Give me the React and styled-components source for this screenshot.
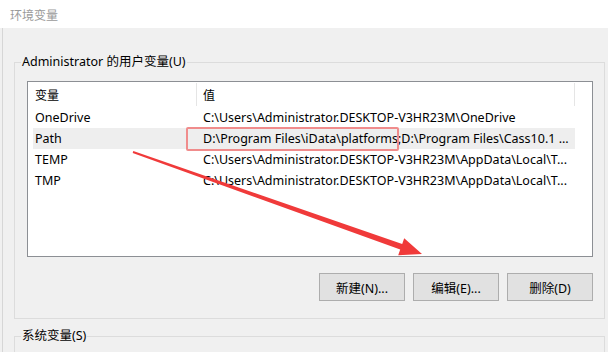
import React from "react";
import styled, { createGlobalStyle } from "styled-components";

const Global = createGlobalStyle`
  html, body { margin: 0; padding: 0; }
  body {
    font-family: "Noto Sans", "Noto Sans CJK SC", sans-serif;
    font-size: 12.5px;
    color: #000;
    background: #f0f0f0;
  }
`;

const Window = styled.div`
  position: relative;
  width: 608px;
  height: 352px;
  overflow: hidden;
  background:
    linear-gradient(to right, transparent 2px, #d6d6d6 2px, #d6d6d6 3px, transparent 3px),
    #f0f0f0;
  display: flex;
  flex-direction: column;
`;

const TitleBar = styled.div`
  height: 28px;
  flex: none;
  background: #fff;
  display: flex;
  align-items: center;
  padding-left: 10px;
  color: #9a9a9a;
  font-family: "Noto Sans CJK SC", sans-serif;
  font-size: 12px;
`;

const Group = styled.fieldset`
  margin: ${(p) => p.$mt}px 3px 0 14px;
  padding: 0;
  border: 1px solid #dcdcdc;
  min-width: 0;
`;

const Legend = styled.legend`
  margin-left: 6px;
  padding: 0 1px;
  height: 16px;
  line-height: 16px;
  font-family: "Noto Sans", "Noto Sans CJK SC", sans-serif;
  font-size: 12.5px;
  color: #000;
`;

const GroupBody = styled.div`
  padding: 11px 11px 17px 12px;
  display: flex;
  flex-direction: column;
`;

const ListBox = styled.div`
  position: relative;
  height: 176px;
  box-sizing: border-box;
  border: 1px solid #8c8f94;
  background: #fff;
  display: flex;
  flex-direction: column;
`;

const HeaderRow = styled.div`
  display: flex;
  height: 25px;
  padding-left: 5px;
  align-items: stretch;
`;

const HeadCell = styled.div`
  width: ${(p) => p.$w}px;
  box-sizing: border-box;
  padding-left: ${(p) => p.$pl}px;
  display: flex;
  align-items: center;
  border-right: ${(p) => (p.$sep ? "1px solid #e5e5e5" : "none")};
  margin: 1px 0 1px;
  font-family: "Noto Sans CJK SC", sans-serif;
  font-size: 12px;
`;

const Row = styled.div`
  display: flex;
  height: 21px;
  margin-left: 5px;
  width: 542px;
  background: ${(p) => (p.$hl ? "#eeeeee" : "transparent")};
  align-items: center;
`;

const Cell = styled.div`
  width: ${(p) => p.$w}px;
  box-sizing: border-box;
  padding-left: ${(p) => p.$pl}px;
  white-space: nowrap;
  overflow: hidden;
`;

const Mark = styled.div`
  position: absolute;
  left: 158px;
  top: 45px;
  width: 213px;
  height: 24px;
  box-sizing: border-box;
  border: 2px solid #f08c8c;
  border-radius: 2px;
  pointer-events: none;
`;

const Buttons = styled.div`
  display: flex;
  justify-content: flex-end;
  gap: 8px;
  margin-top: 16px;
`;

const Button = styled.button`
  width: 86px;
  height: 28px;
  box-sizing: border-box;
  border: 1px solid #adadad;
  background: #e1e1e1;
  font-family: "Noto Sans", "Noto Sans CJK SC", sans-serif;
  font-size: 12.5px;
  color: #000;
  padding: 0;
  cursor: default;
`;

const Arrow = styled.svg`
  position: absolute;
  left: 0;
  top: 0;
  pointer-events: none;
`;

const rows = [
  ["OneDrive", "C:\\Users\\Administrator.DESKTOP-V3HR23M\\OneDrive"],
  ["Path", "D:\\Program Files\\iData\\platforms;D:\\Program Files\\Cass10.1 ..."],
  ["TEMP", "C:\\Users\\Administrator.DESKTOP-V3HR23M\\AppData\\Local\\T..."],
  ["TMP", "C:\\Users\\Administrator.DESKTOP-V3HR23M\\AppData\\Local\\T..."],
];

export default function App() {
  return (
    <>
      <Global />
      <Window>
        <TitleBar>环境变量</TitleBar>
        <Group $mt={26}>
          <Legend>Administrator 的用户变量(U)</Legend>
          <GroupBody>
            <ListBox>
              <HeaderRow>
                <HeadCell $w={164} $pl={2} $sep>变量</HeadCell>
                <HeadCell $w={378} $pl={6} $sep>值</HeadCell>
              </HeaderRow>
              {rows.map(([k, v]) => (
                <Row key={k} $hl={k === "Path"}>
                  <Cell $w={164} $pl={2}>{k}</Cell>
                  <Cell $w={372} $pl={6}>{v}</Cell>
                </Row>
              ))}
              <Mark />
            </ListBox>
            <Buttons>
              <Button>新建(N)...</Button>
              <Button>编辑(E)...</Button>
              <Button>删除(D)</Button>
            </Buttons>
          </GroupBody>
        </Group>
        <Group $mt={9}>
          <Legend>系统变量(S)</Legend>
          <GroupBody />
        </Group>
        <Arrow width="608" height="352" viewBox="0 0 608 352">
          <polygon
            fill="#f03a3a"
            points="133.3,151.1 402.2,243.9 404.2,238.2 422,254 398.2,255.2 400.2,249.5 132.7,152.9"
          />
        </Arrow>
      </Window>
    </>
  );
}
